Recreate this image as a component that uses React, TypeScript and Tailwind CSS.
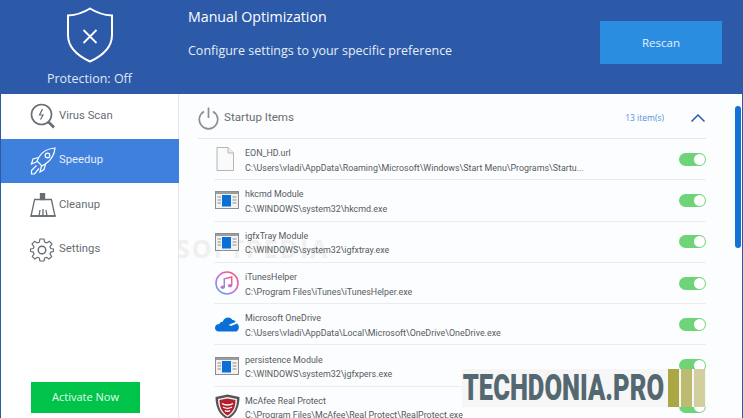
import type { ReactNode } from 'react';

const font = { fontFamily: '"Open Sans", "Noto Sans", sans-serif' };
const rowFont = { fontFamily: 'Roboto, "Noto Sans", sans-serif' };

function Shield() {
  return (
    <svg width="48" height="56" viewBox="0 0 48 56" fill="none" stroke="#fff" strokeWidth="2">
      <path d="M24 1.5 C31 6 38 8 46 8.5 V28 C46 40 36 49 24 54.5 C12 49 2 40 2 28 V8.5 C10 8 17 6 24 1.5 Z" />
      <path d="M17.5 23 L30.5 36 M30.5 23 L17.5 36" strokeWidth="1.8" />
    </svg>
  );
}

function ScanIcon() {
  return (
    <svg width="26" height="26" viewBox="0 0 26 26" fill="none" stroke="#666d73" strokeWidth="1.6">
      <circle cx="11.5" cy="11.5" r="10" />
      <path d="M18.5 19 L24 24.5" strokeWidth="2.6" />
      <path d="M12.5 6 L9.5 12 H13 L10.5 16.5" strokeWidth="1.2" />
    </svg>
  );
}

function RocketIcon() {
  return (
    <svg width="26" height="28" viewBox="0 0 26 28" fill="none" stroke="#fff" strokeWidth="1.2">
      <path d="M25 1 C18 1.5 12 5 9 10 L7 14 L12 19 L16 16.5 C21 13 24.5 8 25 1 Z" />
      <circle cx="17.5" cy="8.5" r="2.3" />
      <path d="M8.5 10.5 L3 12 L1.5 17 L7.5 14.5 M15.5 17 L14 22.5 L10 25 L11.5 18.5" />
      <path d="M6.5 18.5 L1.5 23.5 L1.5 27 L4.5 27 L9 21.5" />
    </svg>
  );
}

function BroomIcon() {
  return (
    <svg width="26" height="24" viewBox="0 0 26 24" fill="none" stroke="#666d73" strokeWidth="1.3">
      <rect x="10.5" y="0.5" width="4" height="6" fill="#666d73" />
      <path d="M4 6.5 H22" strokeWidth="1.5" />
      <path d="M4.5 7 L1 23 H25 L21.5 7" />
      <path d="M9 23 L10 17 M13 23 V16 M17 23 L16 17" />
      <path d="M0.5 23 H25.5" strokeWidth="1.6" />
    </svg>
  );
}

function GearIcon() {
  return (
    <svg width="24" height="24" viewBox="0 0 24 24" fill="none" stroke="#666d73" strokeWidth="1.2">
      <circle cx="12" cy="12" r="3.8" strokeWidth="1.4" />
      <path d="M10 1 H14 L14.7 4.2 L16.6 5 L19.4 3.3 L22 6.2 L20 8.7 L20.7 10.5 L23.5 11 V13.5 L20.7 14.2 L20 16 L21.7 18.6 L19 21 L16.5 19.3 L14.7 20 L14 23 H10 L9.3 20 L7.5 19.3 L5 21 L2.3 18.6 L4 16 L3.3 14.2 L0.5 13.5 V11 L3.3 10.5 L4 8.7 L2 6.2 L4.6 3.3 L7.4 5 L9.3 4.2 Z" strokeLinejoin="round" />
    </svg>
  );
}

function PowerIcon() {
  return (
    <svg width="21" height="23" viewBox="0 0 21 23" fill="none" stroke="#8a8f93" strokeWidth="1.7">
      <path d="M6 4.6 A9.2 9.2 0 1 0 15 4.6" />
      <path d="M10.5 0.5 V11" />
    </svg>
  );
}

function FileIcon() {
  return (
    <svg className="ml-[1px]" width="18" height="24" viewBox="0 0 18 24" fill="#fafafa" stroke="#b4b4b4" strokeWidth="1">
      <path d="M1 0.5 H12 L17.5 6 V23.5 H1 Z" />
      <path d="M12 0.5 V6 H17.5" fill="#f0f0f0" />
    </svg>
  );
}

function ModuleIcon() {
  return (
    <svg width="24" height="18" viewBox="0 0 24 18">
      <rect x="0.5" y="0.5" width="23" height="17" fill="#f2f2f2" stroke="#8d8d8d" />
      <rect x="1" y="1" width="22" height="2" fill="#9d9d9d" />
      <rect x="7" y="4" width="9" height="11.5" fill="#0a6fd6" />
      <path d="M2.5 6 H6 M2.5 9 H6 M2.5 12 H6 M17.5 6 H21.5 M17.5 9 H21.5 M17.5 12 H21.5" stroke="#8f8f8f" />
    </svg>
  );
}

function ItunesIcon() {
  return (
    <svg width="24" height="24" viewBox="0 0 24 24" fill="none">
      <defs>
        <linearGradient id="itunes" x1="0.9" y1="0" x2="0.1" y2="1">
          <stop offset="0" stopColor="#f45a7c" />
          <stop offset="0.55" stopColor="#c66fe0" />
          <stop offset="1" stopColor="#5aa6f0" />
        </linearGradient>
      </defs>
      <circle cx="12" cy="12" r="11" fill="#fff" stroke="url(#itunes)" strokeWidth="1.6" />
      <path d="M9.3 16 V7.8 L16.7 6 V14.6" stroke="url(#itunes)" strokeWidth="1.5" />
      <ellipse cx="7.7" cy="16.2" rx="2.2" ry="1.8" fill="url(#itunes)" />
      <ellipse cx="15" cy="14.8" rx="2.2" ry="1.8" fill="url(#itunes)" />
    </svg>
  );
}

function CloudIcon() {
  return (
    <svg width="24" height="16" viewBox="0 0 24 16">
      <path d="M8 5 C9.5 1 15 0 17.5 4 C19 3.8 20 4.6 20.6 6 L12 9.5 L8.5 7 Z" fill="#0a6fd6" />
      <path d="M4 15.5 C1 15.5 0 13.5 0 12 C0 9.5 2 8 4.3 8 C6 4.6 10.5 4.8 12 8 L16 10 L22 7.5 C24 9 24.5 12 23 14 C22.5 15 21.5 15.5 20.5 15.5 Z" fill="#0a6fd6" />
    </svg>
  );
}

function McafeeIcon() {
  return (
    <svg width="25" height="26" viewBox="0 0 25 26">
      <path d="M12.5 0.5 L24.5 3 C24.5 13 21 21 12.5 25.5 C4 21 0.5 13 0.5 3 Z" fill="#555" />
      <path d="M12.5 3 L22 5 C22 13 19 19.5 12.5 23 C6 19.5 3 13 3 5 Z" fill="#f2f2f2" />
      <path d="M12.5 4.5 L20.5 6 C20.5 13 18 18.5 12.5 21.5 C7 18.5 4.5 13 4.5 6 Z" fill="#b3202c" />
      <path d="M7 9.5 C10 11.5 15 11.5 18 9.5 M8 13 C10.5 14.5 14.5 14.5 17 13 M9.8 16.5 C11.5 17.5 13.5 17.5 15.2 16.5" stroke="#fff" strokeWidth="1.4" fill="none" />
    </svg>
  );
}

function Toggle() {
  return (
    <div className="flex h-[13px] w-[27px] items-center justify-end rounded-full bg-[#6ed477]">
      <div className="mr-px h-[11px] w-[11px] rounded-full bg-white" />
    </div>
  );
}

function NavItem({ icon, label, active }: { icon: ReactNode; label: string; active?: boolean }) {
  return (
    <div className={`-mr-px flex h-[44.5px] items-center pl-[29px] ${active ? 'bg-[#3f80dc] text-[#e6effb]' : 'text-[#666d73]'}`}>
      <div className="flex w-[29px] shrink-0 items-center">{icon}</div>
      <span className="text-[11.3px]" style={rowFont}>{label}</span>
    </div>
  );
}

const items: { icon: ReactNode; name: string; path: string }[] = [
  { icon: <FileIcon />, name: 'EON_HD.url', path: 'C:\\Users\\vladi\\AppData\\Roaming\\Microsoft\\Windows\\Start Menu\\Programs\\Startu...' },
  { icon: <ModuleIcon />, name: 'hkcmd Module', path: 'C:\\WINDOWS\\system32\\hkcmd.exe' },
  { icon: <ModuleIcon />, name: 'igfxTray Module', path: 'C:\\WINDOWS\\system32\\igfxtray.exe' },
  { icon: <ItunesIcon />, name: 'iTunesHelper', path: 'C:\\Program Files\\iTunes\\iTunesHelper.exe' },
  { icon: <CloudIcon />, name: 'Microsoft OneDrive', path: 'C:\\Users\\vladi\\AppData\\Local\\Microsoft\\OneDrive\\OneDrive.exe' },
  { icon: <ModuleIcon />, name: 'persistence Module', path: 'C:\\WINDOWS\\system32\\jgfxpers.exe' },
  { icon: <McafeeIcon />, name: 'McAfee Real Protect', path: 'C:\\Program Files\\McAfee\\Real Protect\\RealProtect.exe' },
];

export default function App() {
  return (
    <div className="relative flex h-[418px] w-[743px] flex-col overflow-hidden bg-white" style={font}>
      <header className="flex h-[94px] shrink-0 bg-[#2c5aa9] text-white">
        <div className="flex w-[179px] shrink-0 flex-col items-center pt-[7px]">
          <Shield />
          <span className="mt-[8px] text-[12.5px] leading-[16px] text-[#dfe8f5]">Protection: Off</span>
        </div>
        <div className="w-[421px] pl-[9px] pt-[8px]">
          <div className="text-[14.2px] leading-[18px]">Manual Optimization</div>
          <div className="mt-[16px] text-[12.5px] leading-[18px] text-[#e6edf8]">Configure settings to your specific preference</div>
        </div>
        <div className="pt-[21px]">
          <button className="h-[43px] w-[122px] bg-[#2b8de0] text-[11.5px] text-[#e6f1fc]">Rescan</button>
        </div>
      </header>
      <div className="flex min-h-0 flex-1 border-x border-x-[#2c5aa9] bg-[#fcfdfe]">
        <aside className="relative z-10 flex w-[178px] shrink-0 flex-col border-r border-r-[#e6e6e6] bg-white">
          <NavItem icon={<ScanIcon />} label="Virus Scan" />
          <NavItem icon={<RocketIcon />} label="Speedup" active />
          <NavItem icon={<BroomIcon />} label="Cleanup" />
          <NavItem icon={<GearIcon />} label="Settings" />
          <div className="mt-[110px] flex justify-center pr-[8px]">
            <button className="h-[31px] w-[109px] bg-[#00c34a] text-[11px] text-[#e6fbee]">Activate Now</button>
          </div>
        </aside>
        <main className="relative z-10 min-w-0 flex-1 pl-[19px]">
          <div className="flex h-[45px] w-[508px] items-center border-b border-b-[#e8e8e8] pt-[4px]">
            <PowerIcon />
            <span className="ml-[5px] text-[11.6px] text-[#666d73]" style={rowFont}>Startup Items</span>
            <span className="ml-auto text-[8.5px] text-[#5b8fe0]">13 item(s)</span>
            <svg className="ml-[27px] mr-px" width="14" height="8" viewBox="0 0 14 8" fill="none" stroke="#2c5aa9" strokeWidth="1.5">
              <path d="M0.5 7.5 L7 1 L13.5 7.5" />
            </svg>
          </div>
          <div className="ml-[16px] w-[492px]">
            {items.map((item) => (
              <div key={item.name} className="flex h-[41.3px] items-center border-b border-b-[#ececec]">
                <div className="flex w-[31px] shrink-0 items-center pl-px">{item.icon}</div>
                <div className="min-w-0 flex-1 pt-[3px] text-[#555b60]" style={rowFont}>
                  <div className="text-[8.9px] leading-[14.5px]">{item.name}</div>
                  <div className="text-[8.9px] leading-[14.5px]">{item.path}</div>
                </div>
                <Toggle />
              </div>
            ))}
          </div>
        </main>
        <div className="mr-px mt-[12px] h-[142px] w-[6px] shrink-0 rounded-full bg-[#1272d8]" />
      </div>
      <span className="absolute left-[176px] top-[230px] text-[25px] font-bold tracking-[2px] text-[#f0f0f0]">SOFTPEDIA</span>
      <div className="absolute left-[462px] top-[369px] z-20 flex h-[38px] w-[244px] items-center bg-[#f6f6f6]">
        <span className="origin-left scale-x-[0.71] whitespace-nowrap pl-px text-[36px] font-black leading-none text-[#546871]" style={rowFont}>TECHDONIA.PRO</span>
        <div className="absolute right-px top-0 flex h-full gap-[2px]">
          <div className="w-[11px] bg-[#a9a845]" />
          <div className="w-[11px] bg-[#bdba72]" />
          <div className="w-[11px] bg-[#d2cf9e]" />
        </div>
      </div>
    </div>
  );
}
